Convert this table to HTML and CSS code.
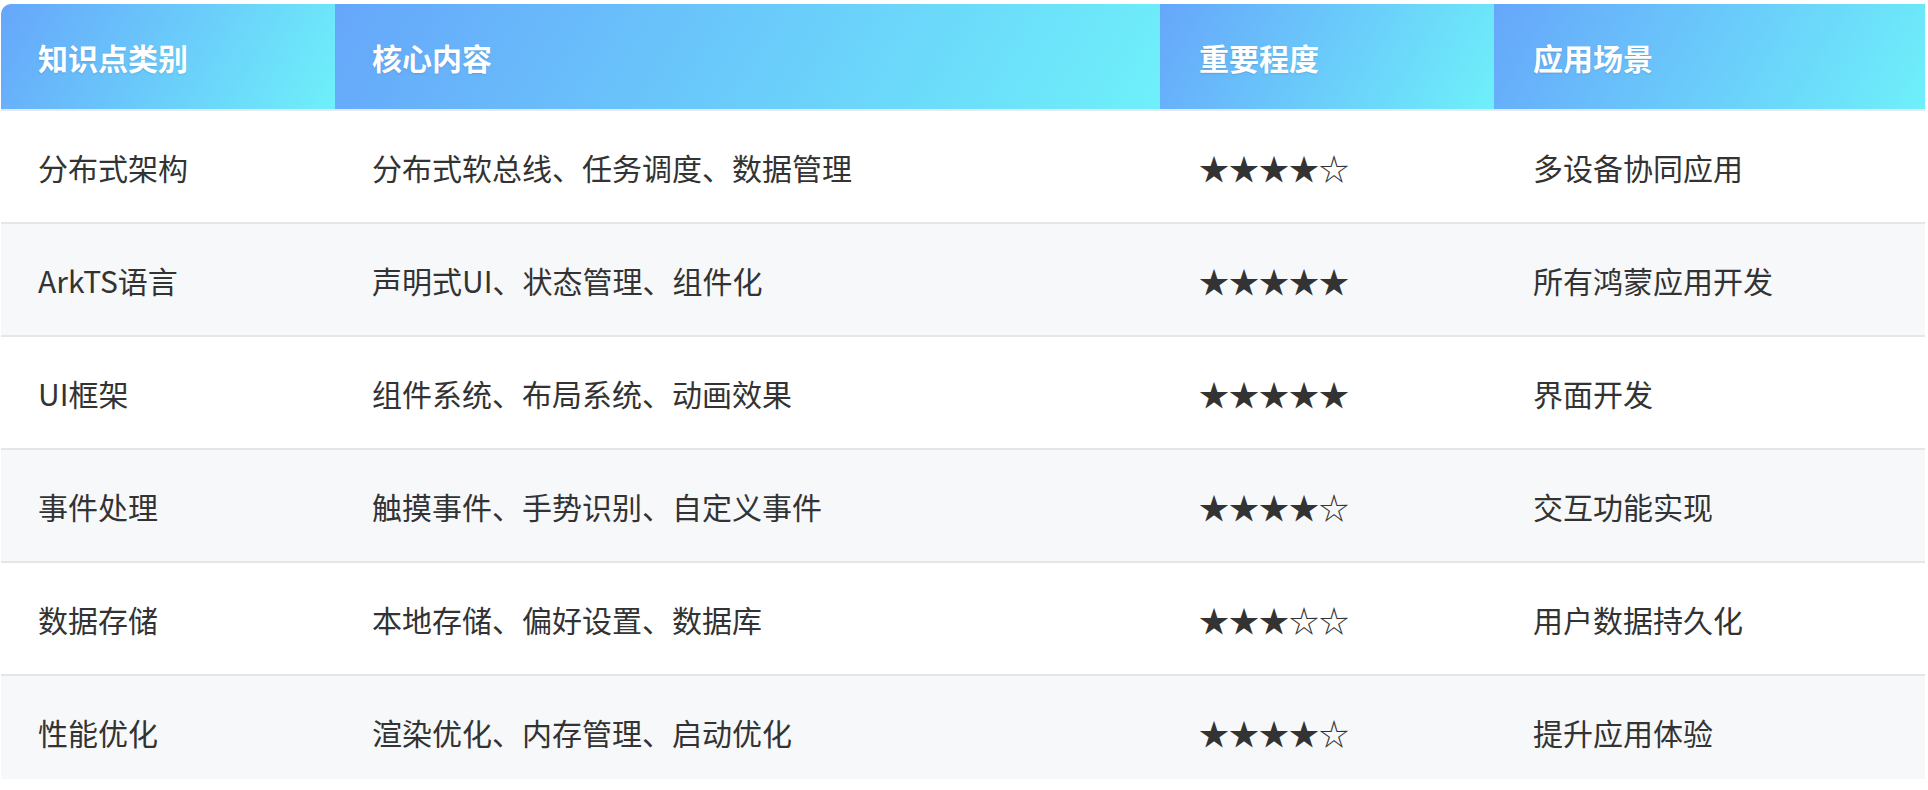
FILE: index.html
```html
<!DOCTYPE html>
<html lang="zh-CN">
<head>
<meta charset="utf-8">
<title>知识点表</title>
<link rel="stylesheet" href="styles.css">
</head>
<body>
<div class="table-wrap">
  <table class="kt">
    <colgroup>
      <col class="c1"><col class="c2"><col class="c3"><col class="c4">
    </colgroup>
    <thead>
      <tr><th>知识点类别</th><th>核心内容</th><th>重要程度</th><th>应用场景</th></tr>
    </thead>
    <tbody>
      <tr><td>分布式架构</td><td>分布式软总线、任务调度、数据管理</td><td class="stars">★★★★☆</td><td>多设备协同应用</td></tr>
      <tr><td>ArkTS语言</td><td>声明式UI、状态管理、组件化</td><td class="stars">★★★★★</td><td>所有鸿蒙应用开发</td></tr>
      <tr><td>UI框架</td><td>组件系统、布局系统、动画效果</td><td class="stars">★★★★★</td><td>界面开发</td></tr>
      <tr><td>事件处理</td><td>触摸事件、手势识别、自定义事件</td><td class="stars">★★★★☆</td><td>交互功能实现</td></tr>
      <tr><td>数据存储</td><td>本地存储、偏好设置、数据库</td><td class="stars">★★★☆☆</td><td>用户数据持久化</td></tr>
      <tr><td>性能优化</td><td>渲染优化、内存管理、启动优化</td><td class="stars">★★★★☆</td><td>提升应用体验</td></tr>
    </tbody>
  </table>
</div>
</body>
</html>
```
FILE: styles.css
```css
html, body {
  margin: 0;
  padding: 0;
  background: #ffffff;
}
body {
  font-family: "Noto Sans CJK SC", "Noto Sans", sans-serif;
  color: #333333;
  padding: 4px 0 0 1px;
}
.table-wrap {
  width: 1924px;
  height: 775px;
  overflow: hidden;
  border-top-left-radius: 10px;
}
.kt {
  width: 1924px;
  table-layout: fixed;
  border-collapse: separate;
  border-spacing: 0;
  font-size: 30px;
}
.c1 { width: 334px; }
.c2 { width: 825px; }
.c3 { width: 334px; }
.c4 { width: 431px; }
.kt th {
  height: 105px;
  padding: 0 0 0 37px;
  text-align: left;
  font-weight: 700;
  color: #ffffff;
  text-shadow: 0 1px 2px rgba(0, 0, 0, 0.12);
  background: linear-gradient(120deg, #66a6fa 0%, #6ef0fa 100%);
  border-bottom: 2px solid #e6e9ee;
  vertical-align: middle;
}
.kt td {
  height: 111px;
  padding: 0 0 0 37px;
  border-bottom: 2px solid #e4e6ea;
  vertical-align: middle;
  white-space: nowrap;
}
.kt th:nth-child(n+3), .kt td:nth-child(n+3) {
  padding-left: 39px;
}
.kt tbody tr:nth-child(even) td {
  background: #f7f8fa;
}
.stars {
  color: #333333;
  letter-spacing: 0;
}
```
